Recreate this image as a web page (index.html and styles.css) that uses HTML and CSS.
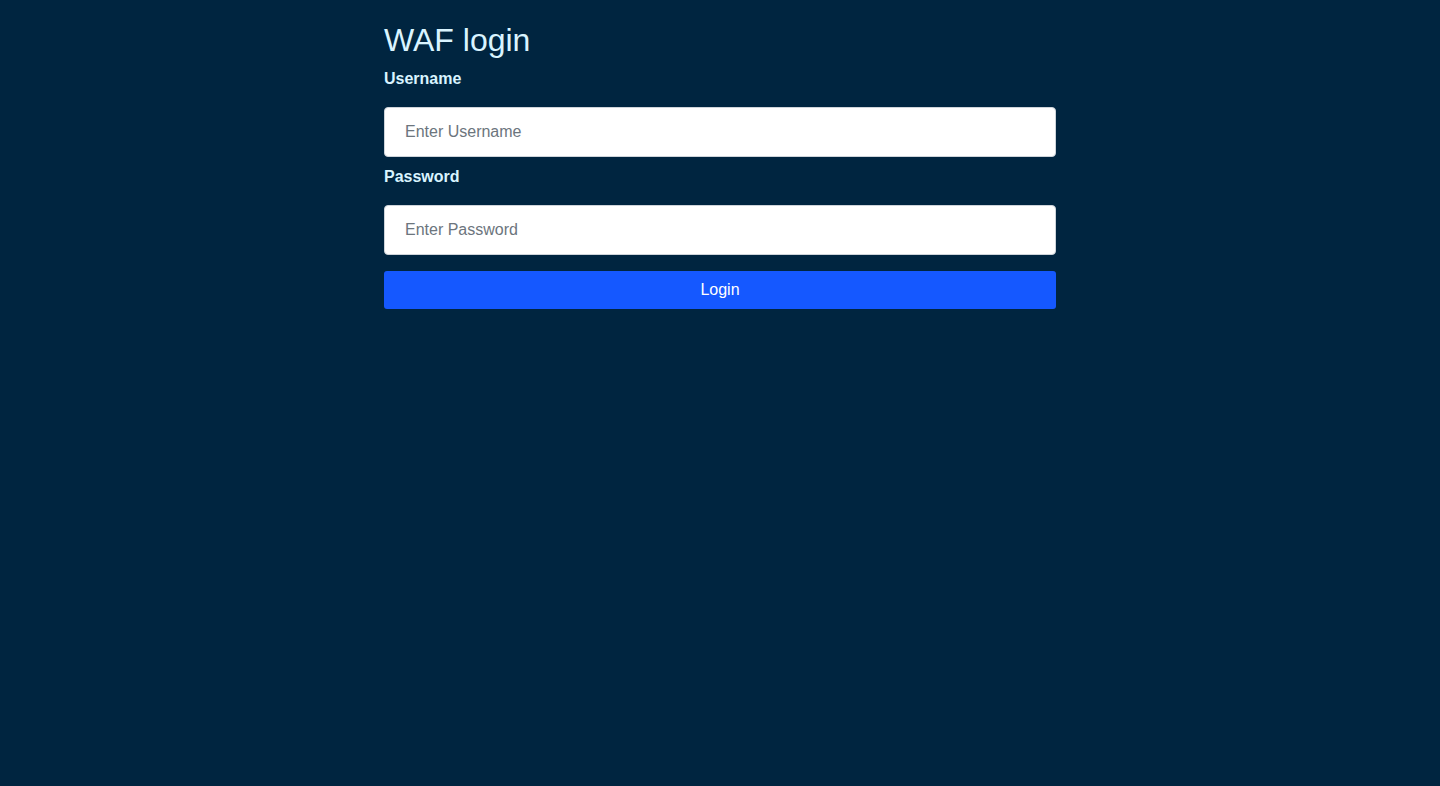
FILE: index.html
```html
<!DOCTYPE html>
<html lang="en">
<head>
<meta charset="utf-8">
<title>WAF login</title>
<link rel="stylesheet" href="styles.css">
</head>
<body>
<main class="container">
  <h1 class="title">WAF login</h1>
  <form class="login-form">
    <label class="field-label" for="username">Username</label>
    <input class="field-input" id="username" type="text" placeholder="Enter Username">
    <label class="field-label field-label--second" for="password">Password</label>
    <input class="field-input" id="password" type="password" placeholder="Enter Password">
    <button class="login-btn" type="button">Login</button>
  </form>
</main>
</body>
</html>
```
FILE: styles.css
```css
html, body {
  margin: 0;
  padding: 0;
  height: 100%;
}
body {
  background: #002540;
  font-family: "Liberation Sans", Arial, Helvetica, sans-serif;
  color: #d9f4ff;
}
.container {
  width: 672px;
  margin: 0 auto;
  padding-top: 20px;
}
.title {
  margin: 0;
  font-size: 32px;
  font-weight: 400;
  line-height: 40px;
  color: #d9f4ff;
}
.login-form {
  display: flex;
  flex-direction: column;
}
.field-label {
  display: block;
  margin-top: 8px;
  font-size: 16px;
  font-weight: 700;
  line-height: 21px;
  color: #d9f4ff;
}
.field-label--second {
  margin-top: 9px;
}
.field-input {
  box-sizing: border-box;
  margin-top: 18px;
  height: 50px;
  width: 100%;
  padding: 0 20px;
  border: 1px solid #ced4da;
  border-radius: 4px;
  background: #fff;
  font-family: inherit;
  font-size: 16px;
  color: #212529;
  outline: none;
}
.field-input::placeholder {
  color: #6c757d;
}
.login-btn {
  margin-top: 16px;
  height: 38px;
  width: 100%;
  border: none;
  border-radius: 3px;
  background: #1558ff;
  color: #fff;
  font-family: inherit;
  font-size: 16px;
  cursor: pointer;
}
```
